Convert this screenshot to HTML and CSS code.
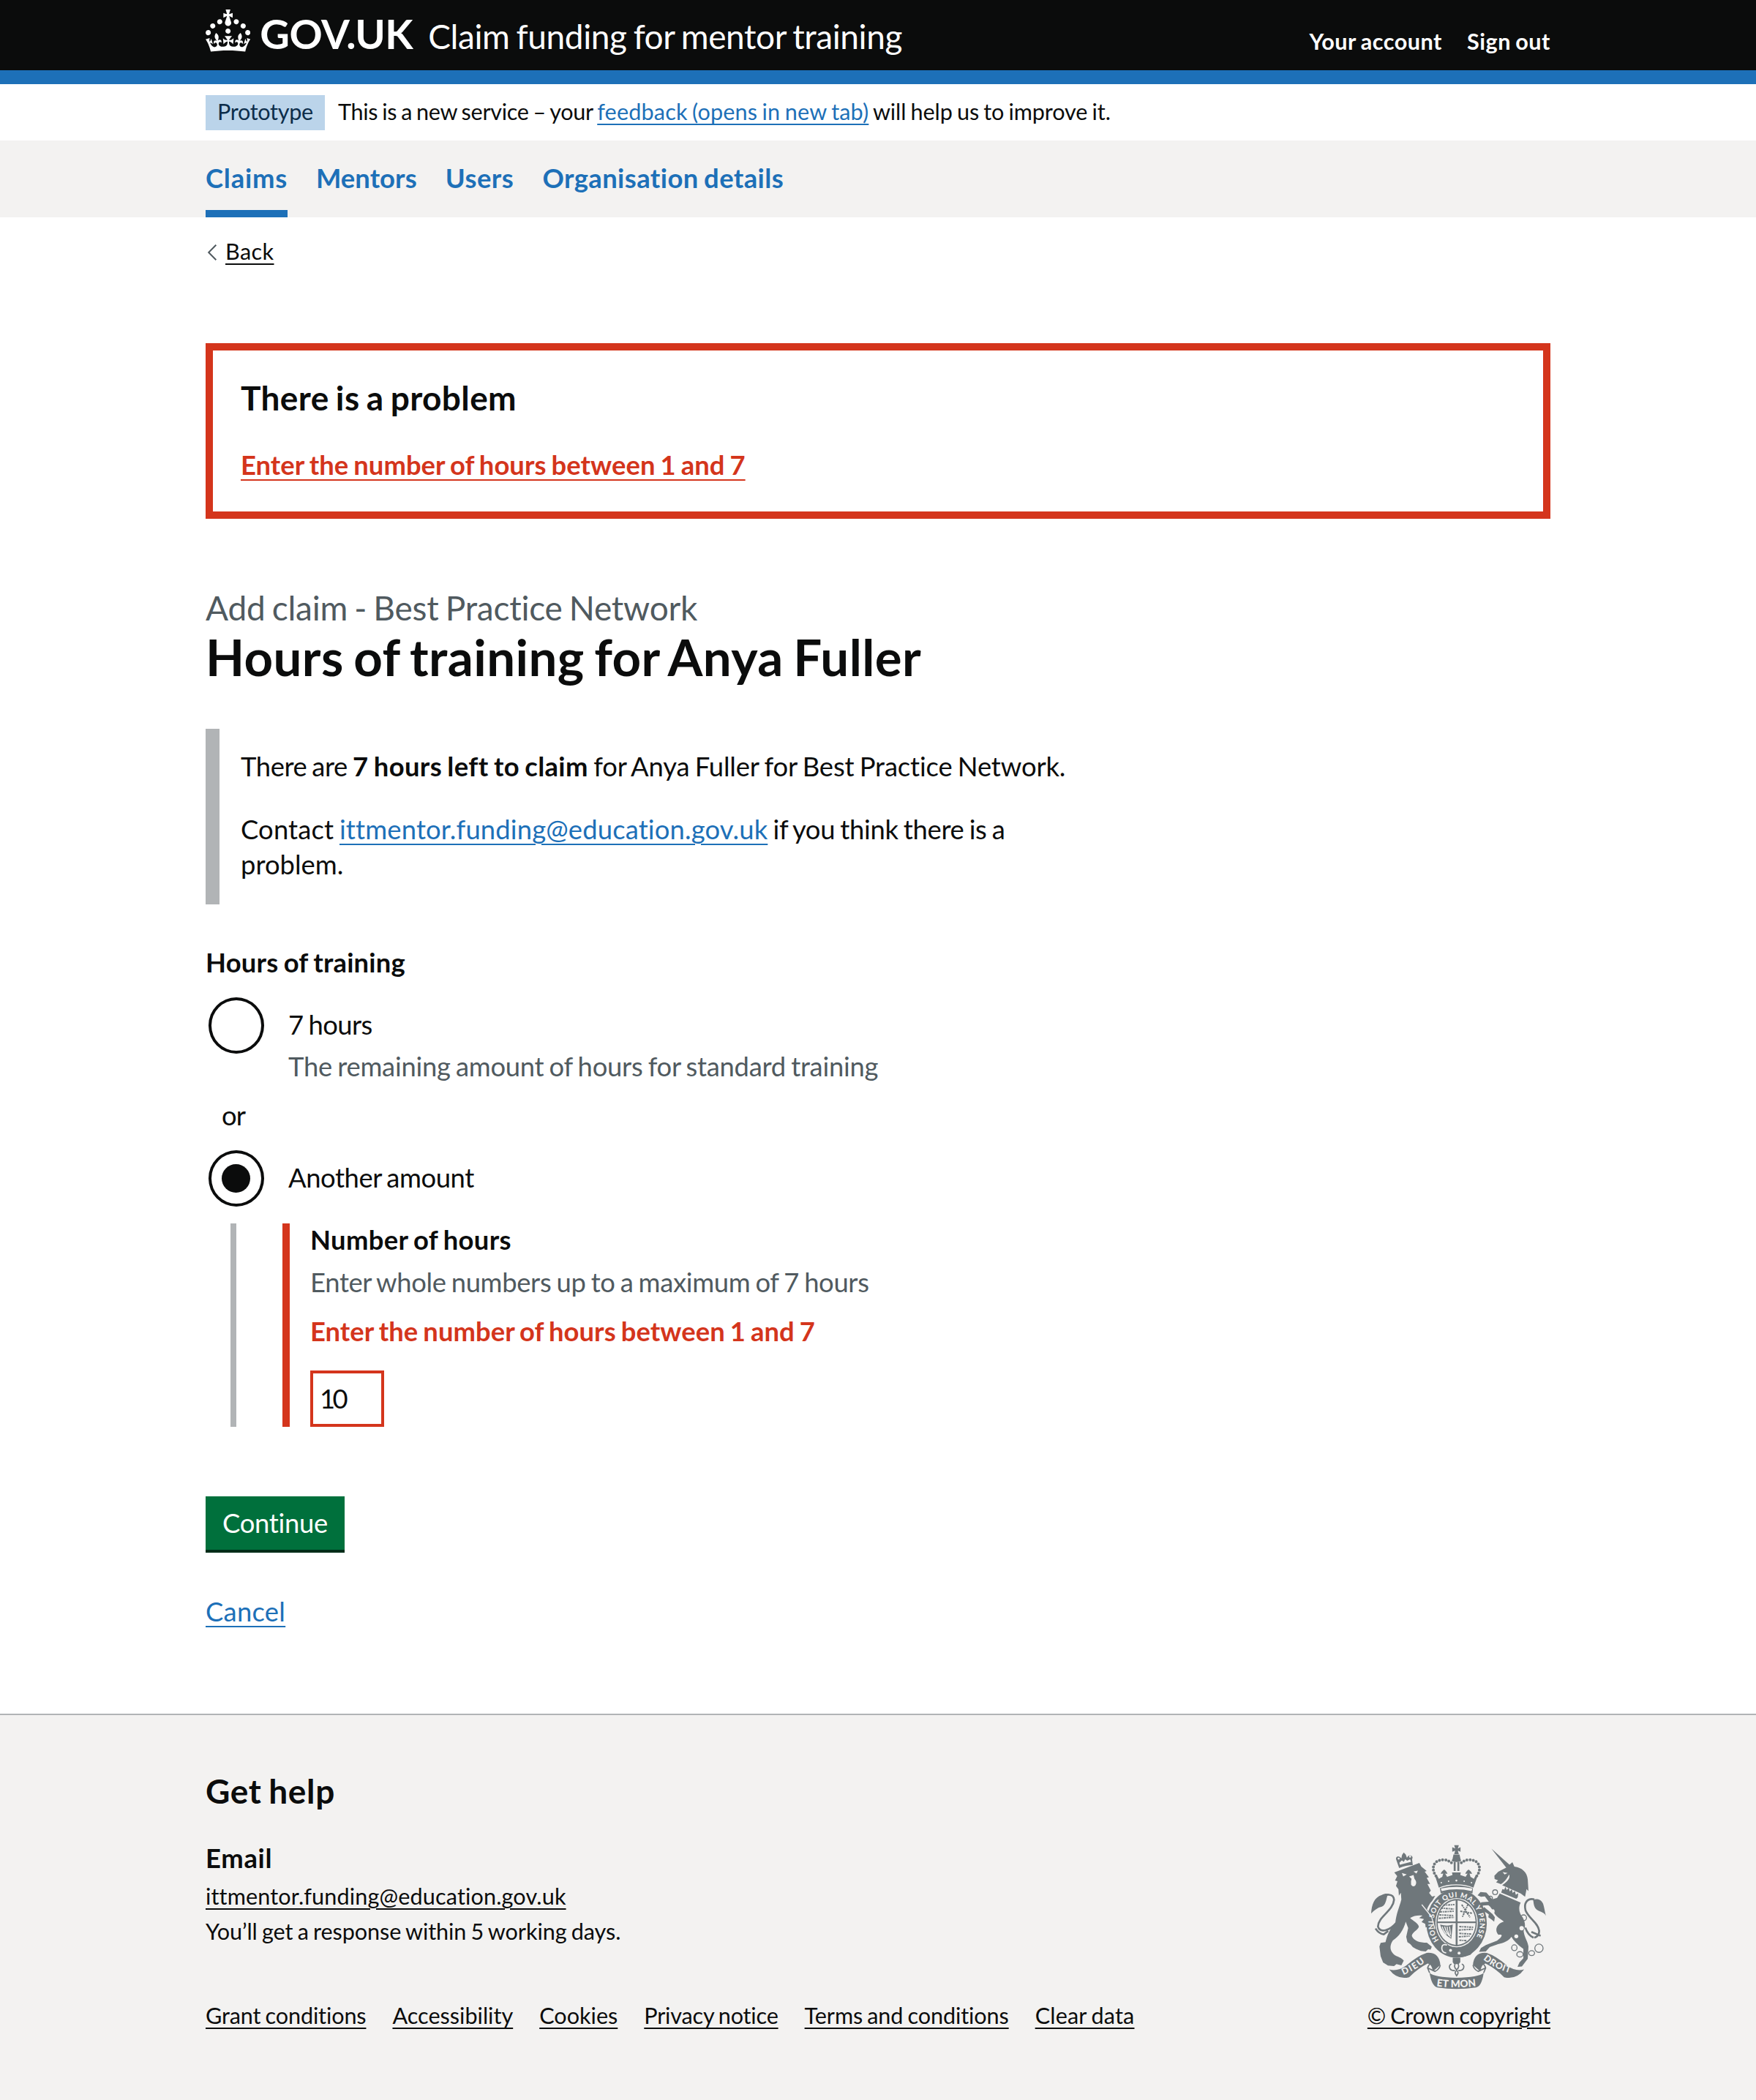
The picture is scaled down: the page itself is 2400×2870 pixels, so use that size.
FILE: index.html
```html
<!DOCTYPE html>
<html lang="en">
<head>
<meta charset="utf-8">
<title>Hours of training for Anya Fuller – Claim funding for mentor training – GOV.UK</title>
<link rel="stylesheet" href="styles.css">
</head>
<body>
<header class="header">
  <div class="container header-row">
    <div class="brand">
      <svg class="crown" viewBox="0 0 32 30" aria-hidden="true"><path fill="currentColor" d="M22.6 10.4c-1 .4-2-.1-2.4-1-.4-.9.1-2 1-2.4.9-.4 2 .1 2.4 1s-.1 2-1 2.4m-5.9 6.7c-.9.4-2-.1-2.4-1-.4-.9.1-2 1-2.4.9-.4 2 .1 2.4 1s-.1 2-1 2.4m10.8-3.7c-1 .4-2-.1-2.4-1-.4-.9.1-2 1-2.4.9-.4 2 .1 2.4 1s0 2-1 2.4m3.3 4.8c-1 .4-2-.1-2.4-1-.4-.9.1-2 1-2.4.9-.4 2 .1 2.4 1s-.1 2-1 2.4M17 4.7l2.3 1.2V2.5l-2.3.7-.2-.2.9-3h-3.4l.9 3-.2.2c-.1.1-2.3-.7-2.3-.7v3.4L15 4.7c.1.1.1.2.2.2l-1.3 4c-.1.2-.1.4-.1.6 0 1.1.8 2 1.9 2.2h.7c1-.2 1.9-1.1 1.9-2.1 0-.2 0-.4-.1-.6l-1.3-4c-.1-.2 0-.2.1-.3m-7.6 5.7c.9.4 2-.1 2.4-1 .4-.9-.1-2-1-2.4-.9-.4-2 .1-2.4 1s0 2 1 2.4m-5 3c.9.4 2-.1 2.4-1 .4-.9-.1-2-1-2.4-.9-.4-2 .1-2.4 1s.1 2 1 2.4m-3.2 4.8c.9.4 2-.1 2.4-1 .4-.9-.1-2-1-2.4-.9-.4-2 .1-2.4 1s0 2 1 2.4m14.8 11c4.4 0 8.6.3 12.3.8 1.1-4.5 2.4-7 3.7-8.8l-2.5-.9c.2 1.3.3 1.9 0 2.7-.4-.4-.8-1.1-1.1-2.3l-1.2 4c.7-.5 1.3-.8 2-.9-1.1 2.5-2.6 3.1-3.5 3-1.1-.2-1.7-1.2-1.5-2.1.3-1.2 1.5-1.5 2.1-.1 1.1-2.3-.8-3-2-2.3 1.9-1.9 2.1-3.5.6-5.6-2.1 1.6-2.1 3.2-1.2 5.5-1.2-1.4-3.2-.6-2.5 1.6.9-1.4 2.1-.5 1.9.8-.2 1.1-1.7 2.1-3.5 1.9-2.7-.2-2.9-2.1-2.9-3.6.7-.1 1.9.5 2.9 1.9l.4-4.3c-1.1 1.1-2.1 1.4-3.2 1.4.4-1.2 2.1-3 2.1-3h-5.4s1.7 1.9 2.1 3c-1.1 0-2.1-.2-3.2-1.4l.4 4.3c1-1.4 2.2-2 2.9-1.9-.1 1.5-.2 3.4-2.9 3.6-1.9.2-3.4-.8-3.5-1.9-.2-1.3 1-2.2 1.9-.8.7-2.3-1.2-3-2.5-1.6.9-2.2.9-3.9-1.2-5.5-1.5 2-1.3 3.7.6 5.6-1.2-.7-3.1 0-2 2.3.6-1.4 1.8-1.1 2.1.1.2.9-.3 1.9-1.5 2.1-.9.2-2.4-.5-3.5-3 .6 0 1.2.3 2 .9l-1.2-4c-.3 1.1-.7 1.9-1.1 2.3-.3-.8-.2-1.4 0-2.7l-2.9.9C1.3 23 2.6 25.5 3.7 30c3.7-.5 7.9-.8 12.3-.8"/></svg>
      <span class="logotype">GOV.UK</span>
      <span class="service-name">Claim funding for mentor training</span>
    </div>
    <nav class="account-nav">
      <a class="link-account">Your account</a>
      <a class="link-signout">Sign out</a>
    </nav>
  </div>
</header>

<div class="container phase-banner">
  <strong class="tag">Prototype</strong>
  <span class="phase-text"><span class="phase-lead">This is a new service – your </span><a class="link phase-link">feedback (opens in new tab)</a><span class="phase-tail"> will help us to improve it.</span></span>
</div>

<nav class="primary-nav">
  <div class="container nav-row">
    <a class="nav-item nav-claims current">Claims</a>
    <a class="nav-item nav-mentors">Mentors</a>
    <a class="nav-item nav-users">Users</a>
    <a class="nav-item nav-org">Organisation details</a>
  </div>
</nav>

<div class="container">
  <div class="back">
    <svg class="chevron" viewBox="0 0 14 22" aria-hidden="true"><path d="M12.3 .8 2.2 11l10.100 10.200" fill="none" stroke="#505a5f" stroke-width="2"/></svg>
    <a class="back-link">Back</a>
  </div>

  <main>
    <section class="error-summary">
      <h2 class="error-title">There is a problem</h2>
      <a class="error-link">Enter the number of hours between 1 and 7</a>
    </section>

    <span class="caption">Add claim - Best Practice Network</span>
    <h1 class="heading">Hours of training for Anya Fuller</h1>

    <div class="inset">
      <p><span class="inset-a">There are </span><strong class="inset-b">7 hours left to claim</strong><span class="inset-c"> for Anya Fuller for Best Practice Network.</span></p>
      <p><span class="inset-d">Contact </span><a class="link inset-mail">ittmentor.funding@education.gov.uk</a><span class="inset-e"> if you think there is a</span><br>problem.</p>
    </div>

    <form>
      <h2 class="legend">Hours of training</h2>
      <div class="radio-item">
        <span class="radio"></span>
        <div class="radio-text">
          <label class="label-seven">7 hours</label>
          <div class="hint hint-remaining">The remaining amount of hours for standard training</div>
        </div>
      </div>
      <div class="divider">or</div>
      <div class="radio-item">
        <span class="radio checked"></span>
        <div class="radio-text"><label class="label-another">Another amount</label></div>
      </div>
      <div class="conditional">
        <div class="form-group">
          <label class="field-label">Number of hours</label>
          <div class="hint hint-whole">Enter whole numbers up to a maximum of 7 hours</div>
          <p class="error-message">Enter the number of hours between 1 and 7</p>
          <div class="input"><span>10</span></div>
        </div>
      </div>
      <div class="button">Continue</div>
      <div class="cancel"><a class="link">Cancel</a></div>
    </form>
  </main>
</div>

<footer class="footer">
  <div class="container footer-row">
    <div class="footer-main">
      <h2 class="footer-heading">Get help</h2>
      <h3 class="footer-sub">Email</h3>
      <p class="footer-text footer-mail"><a>ittmentor.funding@education.gov.uk</a></p>
      <p class="footer-text footer-response">You’ll get a response within 5 working days.</p>
      <div class="footer-links">
        <a class="fl-grant">Grant conditions</a>
        <a class="fl-access">Accessibility</a>
        <a class="fl-cookies">Cookies</a>
        <a class="fl-privacy">Privacy notice</a>
        <a class="fl-terms">Terms and conditions</a>
        <a class="fl-clear">Clear data</a>
      </div>
    </div>
    <div class="crest-block">
      <svg class="crest" viewBox="102 62 718 594" aria-hidden="true">
        <defs>
          <path id="garter" d="M380 454A95 108 0 1 1 526 454"/>
          <path id="dieu" d="M234 597Q290 574 334 534"/>
          <path id="mon" d="M370 642Q452 654 538 641"/>
          <path id="droit" d="M562 532Q610 573 678 590"/>
        </defs>
        <g class="ink">
          <!-- lion: crown, mane and body, tail tuft -->
          <path d="M217 158 206 126q-6-14 6-16 8 0 14 8l3-14 7-10 8 8 5 14q5-12 15-10 12 2 6 16l3 24q-28 0-56 12Z"/>
          <path d="M197 176 300 137l8 15 22 18-8 3 17 22-9 3 14 25-11 0 14 27-7 10 12 15 13-3-12 20c-12 12-18 26-22 36l20 24 12 30 4 23-14-4-7 10-10-12-10 3-2-15-15-8 10-12-20-4 14-10c-17-2-37 0-51 10 12 12 33 20 36 36-5 14-27 22-29 37 7 20 32 28 62 28l20 17-5 12-10-2-10 9-20-2-20-8-13-8-10-12-12-8-5-22 8-36-10-26c-8 32-28 62-53 77-10 15-15 35 0 53 10 15 30 12 45 30l-10 19-20-5-10 8-25-2-20-13-10-25-5-40 5-15 20-3c5-22 18-60 40-77 5-45 17-65 25-98l-2-28-8 12-2-26-10-14 6-19-10-3 9-18Z"/>
          <path d="M102 344c2-36 12-66 44-76 8-4 18-6 26-4-8 10-6 44-26 52-18 4-30 14-44 28Z"/>
          <!-- unicorn: horn, head, body, tail tuft -->
          <path d="M596 78 672 146 658 158Z"/>
          <path d="M656 156 682 134l8 18c32 4 52 24 55 52l3 48-8-8-6 32-18-14-76-34c20-14 34-26 29-44-12 22-22 32-34 40l-20-8 8-8-14-5-1-14 16-16Z"/>
          <path d="M630 262 716 300c-12 24-4 46 8 60 12 22 12 40 4 55 2 25 18 45 20 65l-3 50-24 32-18 1 8-18 16-17 0-38c-28-22-40-35-49-50-10 15-30 25-55 30l-34 12-16 18-28 2 8-16 20-12 46-18c22-16 26-28 6-24-18-18-8-46 22-54-14-12-30-18-40-36-10-16-12-24-24-32l-22 2-4 12-16-12 14-14 30-2-16-22-16 2-14-6 12-14 24 2 24 28 20-6Z"/>
          <path d="M566 318l34 28 10 14-3 18-12-10-12-8 2-12-28-18Z"/>
          <path d="M820 354c-10-20-30-14-44-32-8-12-6-26-10-34 16-6 34-2 42 16 6 18 6 30 12 50Z"/>
          <!-- garter ring -->
          <ellipse cx="453" cy="385" rx="124" ry="141"/>
          <!-- royal crown -->
          <path d="M443 64h19l-4 13 11-5v19l-11-5 4 15h-19l4-15-12 5V72l12 5Z"/>
          <path d="M440 102h25l5 24h-35Z"/><ellipse cx="452" cy="126" rx="19" ry="7"/>
          <path d="M441 132h8v38h-8ZM456 132h8v38h-8Z"/>
          <path d="M362 182c8 4 14 10 18 20l14-8 4-14-10 2c2-10 10-14 14-18 8 6 12 12 13 18l-9-2 8 14 22-8-2-10h36l-2 10 22 8 8-14-9 2c1-6 5-12 13-18 4 4 12 8 14 18l-10-2 4 14 14 8c4-10 8-16 18-20l-20 56c-40-18-102-18-142 0Z"/>
          <path d="M384 240q68-24 136 0l-2 22q-66-24-130 0Z"/>
          <!-- motto ribbons -->
          <path d="M176 574q34 10 70-16 46-40 84-52 52-4 56 50l-30 26q-6-32-22-32-40 20-76 56-50 12-82-32Z"/>
          <path d="M730 574q-34 10-70-16-46-40-84-52-52-4-56 50l30 26q6-32 22-32 40 20 76 56 50 12 82-32Z"/>
          <path d="M342 588q20 18 110 20 92-2 112-20-8 56-32 60-80 12-158 0-24-6-32-60Z"/>
          <path d="M437 526h31v18l-6 8h-20l-5-8Z"/>
        </g>
        <g class="ink-line">
          <path stroke-width="8" d="M140 284c22-24 54-22 56 4-4 46-66 70-66 110 8 28 48 18 76-16M120 406q14 22 34 24l18-14"/>
          <path stroke-width="8" d="M772 286c-30-6-44 16-36 46 14 34 52 50 56 84 0 14-8 24-20 28M735 402q10 30 34 42M760 420l38 16"/>
          <path stroke-dasharray="0 13" stroke-linecap="round" d="M368 190c-22-30-10-66 30-66 16 0 28 6 38 16M536 190c22-30 10-66-30-66-16 0-28 6-38 16" class="beads"/>
          <path stroke-width="5" d="M386 556q-4 18-22 26-26-12-30-14 4-16 22-24M520 556q4 18 22 26 26-12 30-14-4-16-22-24M342 588l-8-20M564 588l8-20"/>
          <path stroke-width="5" d="M453 600c-8-10-8-16 0-22 8 6 8 12 0 22ZM453 576c-14-12-8-26 0-36 8 10 14 24 0 36ZM446 578c-26 4-28-24-14-26M460 578c26 4 28-24 14-26"/>
          <circle cx="611" cy="257" r="10"/><circle cx="591" cy="282" r="9"/><circle cx="728" cy="362" r="12"/><ellipse cx="690" cy="485" rx="11" ry="12"/><ellipse cx="713" cy="512" rx="13" ry="11"/><ellipse cx="761" cy="507" rx="12" ry="10"/><circle cx="791" cy="487" r="17"/>
        </g>
        <g class="paper">
          <path d="M228 178l20 6-14 8ZM276 172l18-4-6 12ZM258 192l18-6 4 16q12 14 4 26-10 10-18-2-2-14 2-24Z"/>
          <path d="M642 174l20 4-12 6Z"/>
          <circle cx="215" cy="119" r="4"/><circle cx="262" cy="111" r="4"/><path d="M218 136l10-10 8 6 6-10 8 6 12-6 4 10-46 12Z"/>
          <ellipse cx="602" cy="336" rx="7" ry="9"/><circle cx="720" cy="405" r="9"/><circle cx="698" cy="438" r="8"/>
          <path d="M388 242q66-14 130 0l-4 10q-62-14-122 0Z"/>
          <circle cx="390" cy="218" r="3"/><circle cx="420" cy="212" r="3"/><circle cx="452" cy="209" r="4"/><circle cx="484" cy="212" r="3"/><circle cx="514" cy="218" r="3"/>
          <ellipse cx="453" cy="382" rx="87" ry="101"/>
        </g>
        <g class="ink">
          <!-- collar -->
          <path d="M641 244l8 2 4-12 6 14 8-10 4 16 9-9 3 15 9-8 4 15 10-6-2 17-6 6-62-26Z"/>
          <!-- shield: frame, harp, garter buckle -->
          <path fill-rule="evenodd" d="M453 285a83 97 0 1 0 .1 0ZM449 291v86H375a78 91 0 0 1 74-86ZM457 291a78 91 0 0 1 74 86H457ZM375 384h74v89a78 91 0 0 1-74-89ZM457 384h74a78 91 0 0 1-74 89Z"/>
          <path d="M385 390q32 8 52 0l-6 58q-34-18-46-58Z"/>
          <path d="M386 478q10-18 28-10l6 8q60 30 118 6l-28 32q-54 24-108-8-18-6-16-28Z"/>
        </g>
        <g class="ink-line charges">
          <path d="M398 310l46-2M388 322l54 4M384 338l58-3M382 350l60 3M380 364l62-4M464 398l60 3M462 412l58-3M464 426l52 3M462 440l44-3M464 454l32 2M474 308l34 52M500 306l-24 54M468 335l48 8"/>
        </g>
        <g class="paper-line">
          <path stroke-width="4" d="M394 398q4 18 18 32M404 398q4 20 18 38M414 398q2 24 14 44M424 398l4 34"/>
          <path stroke-width="4" d="M310 308l40 50 14 50"/>
          <path stroke-width="5" d="M414 474q-22-8-22 14 2 18 18 18"/>
        </g>
        <g class="paper"><circle cx="428" cy="496" r="6"/><circle cx="463" cy="507" r="6"/></g>
        <g class="motto">
          <text font-size="29"><textPath href="#garter" textLength="450">HONI SOIT QUI MAL Y PENSE</textPath></text>
          <text font-size="37"><textPath href="#dieu" textLength="104">DIEU</textPath></text>
          <text font-size="41"><textPath href="#mon" textLength="164">ET MON</textPath></text>
          <text font-size="37"><textPath href="#droit" textLength="124">DROIT</textPath></text>
        </g>
      </svg>
      <a class="crown-copyright">© Crown copyright</a>
    </div>
  </div>
</footer>
</body>
</html>
```

FILE: styles.css
```css
* { box-sizing: border-box; word-spacing: -0.05em; }
body {
  margin: 0;
  background: #fff;
  color: #0b0c0c;
  font: 400 36.4px/48px Lato, "Noto Sans", sans-serif;
  font-variant-ligatures: none;
}
h1, h2, h3, p { margin: 0; font-size: inherit; }
a {
  text-decoration-line: underline;
  text-decoration-thickness: 2px;
  text-underline-offset: 6px;
}
.container { width: 1838px; margin: 0 auto; }
.link { color: #1d70b8; }

/* Header */
.header { height: 115px; background: #0b0c0c; border-bottom: 19px solid #1d70b8; color: #fff; }
.header-row { display: flex; justify-content: space-between; }
.brand { display: flex; align-items: baseline; padding-top: 13px; }
.crown { width: 61.300px; height: 57.500px; align-self: flex-start; }
.logotype { margin-left: 13px; padding-top: 3px; font-size: 56px; font-weight: 700; line-height: 60px; letter-spacing: -.5px; }
.service-name { margin-left: 21px; font-size: 46px; line-height: 57px; letter-spacing: -.4px; }
.account-nav { display: flex; gap: 34px; padding-top: 38px; font-size: 30.6px; font-weight: 700; line-height: 38px; }
.account-nav a { text-decoration: none; }
.link-account { letter-spacing: .5px; }
.link-signout { letter-spacing: .5px; }

/* Phase banner */
.phase-banner { display: flex; height: 77px; padding-top: 15px; font-size: 30.6px; }
.tag { width: 163px; height: 48px; padding-left: 16px; background: #bbd4ea; color: #0c2d4a; font-weight: 400; line-height: 46px; letter-spacing: -.3px; }
.phase-text { margin-left: 18px; line-height: 46px; white-space: pre; }
.phase-text a { text-underline-offset: 5px; }
.phase-lead { letter-spacing: -.31px; }
.phase-link { letter-spacing: .15px; }
.phase-tail { letter-spacing: -.1px; }

/* Primary navigation */
.primary-nav { height: 105px; background: #f3f2f1; }
.nav-row { display: flex; gap: 39px; height: 105px; }
.nav-item { padding-top: 27px; color: #1d70b8; font-weight: 700; text-decoration: none; }
.current { border-bottom: 10px solid #1d70b8; }
.nav-claims { letter-spacing: .78px; }
.nav-mentors { letter-spacing: .05px; }
.nav-users { letter-spacing: .5px; }
.nav-org { letter-spacing: .41px; }

/* Back link */
.back { display: flex; height: 172px; padding-top: 28px; font-size: 30.6px; line-height: 38px; }
.chevron { width: 14px; height: 22px; margin: 9px 11px 0 2px; }
.back-link { letter-spacing: .4px; text-underline-offset: 5px; }

/* Error summary */
.error-summary { height: 240px; padding: 36px 38px; border: 10px solid #d4351c; }
.error-title { font-size: 46px; line-height: 57px; letter-spacing: .37px; }
.error-link { display: inline-block; margin-top: 39px; color: #d4351c; font-weight: 700; letter-spacing: .03px; }

/* Headings */
.caption { display: block; margin-top: 93px; color: #505a5f; font-size: 46px; line-height: 58px; letter-spacing: -.24px; }
.heading { font-size: 69px; line-height: 76px; letter-spacing: .4px; }

/* Inset text */
.inset { height: 240px; margin-top: 60px; padding: 27px 0 0 29px; border-left: 19px solid #b1b4b6; white-space: nowrap; }
.inset p + p { margin-top: 38px; }
.inset span { white-space: pre; }
.inset-a { letter-spacing: -.43px; }
.inset-b { letter-spacing: .35px; }
.inset-c { letter-spacing: -.15px; }
.inset-d { letter-spacing: .16px; }
.inset-mail { letter-spacing: .15px; }
.inset-e { letter-spacing: -.32px; }

/* Radios */
.legend { margin-top: 55px; letter-spacing: .21px; }
.radio-item { display: flex; gap: 33px; margin-top: 24px; padding-left: 3.500px; }
.radio {
  display: grid;
  place-items: center;
  flex: none;
  width: 76.600px;
  height: 77px;
  border: 4px solid #0b0c0c;
  border-radius: 50%;
}
.checked::after { content: ""; width: 39px; height: 39px; border-radius: 50%; background: #0b0c0c; }
.radio-text { padding-top: 13px; }
.hint { color: #505a5f; }
.hint-remaining { margin-top: 9px; letter-spacing: -.26px; }
.label-seven { display: block; letter-spacing: -.6px; }
.label-another { display: block; letter-spacing: -.43px; }
.divider { margin-top: 19px; padding-left: 22px; letter-spacing: -.9px; }
.conditional { height: 278px; margin: 23px 0 0 34px; padding-left: 63px; border-left: 8px solid #b1b4b6; }
.form-group { height: 278px; padding-left: 28px; border-left: 10px solid #d4351c; }
.field-label { display: block; font-weight: 700; line-height: 44px; letter-spacing: .33px; }
.hint-whole { margin-top: 12px; letter-spacing: -.34px; }
.error-message { margin-top: 19px; color: #d4351c; font-weight: 700; letter-spacing: .04px; }
.input { width: 101px; height: 77px; margin-top: 30px; padding: 10px 0 0 9px; border: 4px solid #d4351c; letter-spacing: -3.500px; }

/* Actions */
.button { width: 190px; height: 73px; margin-top: 95px; background: #00703c; box-shadow: 0 4px 0 #002d18; color: #fff; line-height: 73px; text-align: center; letter-spacing: -.3px; }
.cancel { margin-top: 60px; letter-spacing: .27px; }

/* Footer */
.footer { height: 528px; margin-top: 116px; padding-top: 75px; border-top: 2px solid #b1b4b6; background: #f3f2f1; }
.footer-row { display: flex; justify-content: space-between; }
.footer-heading { font-size: 46px; line-height: 57px; letter-spacing: .69px; }
.footer-sub { margin-top: 39px; letter-spacing: .7px; }
.footer-text { font-size: 30.6px; line-height: 48px; }
.footer-text a { text-underline-offset: 5px; }
.footer-sub + .footer-text { margin-top: 5px; }
.footer-mail { letter-spacing: .14px; }
.footer-response { letter-spacing: -.07px; }
.footer-links { display: flex; gap: 36px; margin-top: 72px; font-size: 30.6px; line-height: 38px; }
.footer-links a, .crown-copyright { text-underline-offset: 5px; }
.fl-grant { letter-spacing: -.13px; }
.fl-privacy { letter-spacing: -.2px; }
.fl-terms { letter-spacing: -.11px; }
.fl-clear { letter-spacing: .17px; }
.crest-block { display: flex; flex-direction: column; align-items: center; padding-top: 102px; font-size: 30.6px; line-height: 38px; }
.crest { width: 239px; height: 198px; }
.crown-copyright { margin-top: 17px; letter-spacing: -.2px; }
.ink { fill: #6f777b; }
.ink-line { fill: none; stroke: #6f777b; stroke-width: 4; }
.beads { stroke-width: 12; }
.charges { stroke-width: 6; stroke-dasharray: 9 3 5 3; }
.paper { fill: #f3f2f1; }
.paper-line { fill: none; stroke: #f3f2f1; }
.motto { fill: #f3f2f1; font-weight: 900; }
.motto * { word-spacing: 0; }
```
